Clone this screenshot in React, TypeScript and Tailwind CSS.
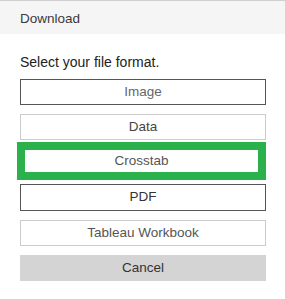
export default function App() {
  const font = { fontFamily: '"Liberation Sans", Arial, sans-serif' };
  return (
    <div style={font} className="w-[285px] h-[299px] bg-white text-[13.5px] overflow-hidden">
      <div className="border-t border-[#cfcfcf] h-[34px] bg-[#f5f5f5] pl-5 pt-[3px] flex items-center text-[#3a3a3a]">
        Download
      </div>

      <p className="mt-5 ml-5 leading-4 text-[14px] text-[#222]">Select your file format.</p>

      <div className="flex flex-col">
        <button className="mt-[9px] ml-5 w-[246px] h-[26px] border border-[#555] text-[#666]">
          Image
        </button>
        <button className="mt-[9px] ml-5 w-[246px] h-[26px] border border-[#ccc] text-[#444]">
          Data
        </button>
        <button className="mt-[2px] ml-[17px] w-[249px] h-[38px] border-8 border-[#2bb14c] text-[#555]">
          Crosstab
        </button>
        <button className="mt-1 ml-5 w-[246px] h-[27px] border border-[#555] text-[#333]">
          PDF
        </button>
        <button className="mt-[9px] ml-5 w-[246px] h-[26px] border border-[#ccc] text-[#555]">
          Tableau Workbook
        </button>
        <button className="mt-[9px] ml-5 w-[246px] h-[26px] bg-[#d4d4d4] text-[#333]">
          Cancel
        </button>
      </div>
    </div>
  );
}
